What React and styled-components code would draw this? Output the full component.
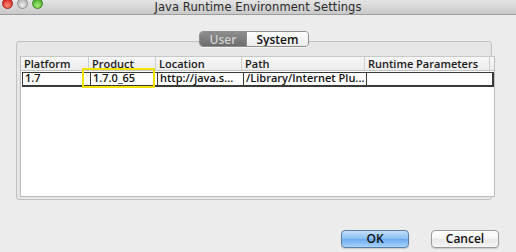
import React from "react";
import styled, { createGlobalStyle } from "styled-components";

const Global = createGlobalStyle`
  html, body { margin: 0; padding: 0; background: #ececec; }
  body { font-family: "Open Sans", "DejaVu Sans", sans-serif; }
`;

const Window = styled.div`
  width: 516px;
  height: 252px;
  background: #ececec;
  display: flex;
  flex-direction: column;
  overflow: hidden;
`;

const TitleBar = styled.div`
  height: 15px;
  flex: none;
  position: relative;
  display: flex;
  align-items: center;
  justify-content: center;
  background: linear-gradient(#e4e4e4, #c9c9c9);
  border-bottom: 1px solid #9d9d9d;
  box-sizing: border-box;
`;

const Lights = styled.div`
  position: absolute;
  left: 2px;
  top: -2px;
  display: flex;
  gap: 4px;
`;

const Light = styled.span`
  width: 11px;
  height: 11px;
  border-radius: 50%;
  box-sizing: border-box;
  border: 1px solid ${(p) => p.$edge};
  background: radial-gradient(circle at 50% 70%, ${(p) => p.$light}, ${(p) => p.$color} 70%);
`;

const Title = styled.div`
  font-family: "DejaVu Sans", sans-serif;
  font-size: 11.5px;
  color: #2a2a2a;
  margin-top: -1px;
  letter-spacing: 0.1px;
`;

const Content = styled.div`
  flex: 1;
  display: flex;
  flex-direction: column;
  padding: 16px 24px 0 16px;
`;

const Tabs = styled.div`
  align-self: center;
  display: flex;
  height: 16px;
  margin-bottom: -6px;
  position: relative;
  z-index: 1;
  border-radius: 4px;
  border: 1px solid #8e8e8e;
  box-sizing: border-box;
  overflow: hidden;
  box-shadow: 0 1px 0 rgba(255, 255, 255, 0.6);
`;

const Tab = styled.div`
  width: ${(p) => p.$w}px;
  display: flex;
  align-items: center;
  justify-content: center;
  font-size: 12px;
  font-weight: 600;
  color: ${(p) => (p.$active ? "#d0d0d0" : "#111")};
  background: ${(p) =>
    p.$active
      ? "linear-gradient(#8e8e8e, #6c6c6c)"
      : "linear-gradient(#ffffff, #ececec)"};
  & + & {
    border-left: 1px solid #8e8e8e;
  }
`;

const Panel = styled.div`
  width: 476px;
  height: 159px;
  box-sizing: border-box;
  border: 1px solid #c2c2c2;
  border-radius: 3px;
  background: #e6e6e6;
  padding: 14px 2px 2px 3px;
  display: flex;
`;

const ScrollPane = styled.div`
  flex: 1;
  background: #fff;
  border: 1px solid #bcbcbc;
  border-top-color: #c8c8c8;
`;

const cols = "68px 67px 86px 123px 125px";

const HeaderRow = styled.div`
  display: grid;
  grid-template-columns: ${cols};
  height: 13px;
  background: linear-gradient(#f7f7f7, #ececec);
  border-bottom: 1px solid #c6c6c6;
`;

const HeadCell = styled.div`
  font-size: 11px;
  line-height: 13px;
  font-weight: 600;
  color: #1a1a1a;
  padding-left: 3px;
  border-right: 1px solid #cfcfcf;
  white-space: nowrap;
  overflow: hidden;
`;

const DataRow = styled.div`
  display: grid;
  grid-template-columns: ${cols};
  height: 15px;
  margin-top: 1px;
  margin-left: 1px;
  box-sizing: border-box;
  border: 1px solid #3a3a3a;
  border-bottom-width: 2px;
  border-right-width: 2px;
`;

const Cell = styled.div`
  position: relative;
  font-size: 11px;
  line-height: 10px;
  font-weight: 600;
  color: #111;
  padding-left: 2px;
  border-right: 1px solid #3a3a3a;
  white-space: nowrap;
  &:last-child { border-right: none; }
`;

const Highlight = styled.div`
  position: absolute;
  left: -9px;
  top: -5px;
  width: 73px;
  height: 20px;
  box-sizing: border-box;
  border: 2px solid #f1e400;
  pointer-events: none;
`;

const Footer = styled.div`
  margin-top: 30px;
  display: flex;
  justify-content: flex-end;
  gap: 22px;
  margin-right: -7px;
`;

const Button = styled.button`
  width: 68px;
  height: 18px;
  box-sizing: border-box;
  border-radius: 4px;
  font-family: "Open Sans", sans-serif;
  font-size: 12px;
  font-weight: 600;
  line-height: 16px;
  padding: 0;
  color: #111;
  border: 1px solid ${(p) => (p.$primary ? "#5b7ea8" : "#9a9a9a")};
  background: ${(p) =>
    p.$primary
      ? "linear-gradient(#c4e0fa 0%, #86bdf2 50%, #6aaaf0 51%, #a9d3fb 100%)"
      : "linear-gradient(#ffffff 0%, #f4f4f4 50%, #e9e9e9 51%, #f6f6f6 100%)"};
  box-shadow: 0 1px 1px rgba(0, 0, 0, 0.15);
`;

export default function App() {
  return (
    <>
      <Global />
      <Window>
        <TitleBar>
          <Lights>
            <Light $color="#d9302a" $light="#ff8f7d" $edge="#a3231d" />
            <Light $color="#b8b8b8" $light="#eeeeee" $edge="#8e8e8e" />
            <Light $color="#4fae2f" $light="#a8ef7a" $edge="#3b8523" />
          </Lights>
          <Title>Java Runtime Environment Settings</Title>
        </TitleBar>
        <Content>
          <Tabs>
            <Tab $w={46} $active>User</Tab>
            <Tab $w={61}>System</Tab>
          </Tabs>
          <Panel>
            <ScrollPane>
              <HeaderRow>
                <HeadCell>Platform</HeadCell>
                <HeadCell>Product</HeadCell>
                <HeadCell>Location</HeadCell>
                <HeadCell>Path</HeadCell>
                <HeadCell>Runtime Parameters</HeadCell>
              </HeaderRow>
              <DataRow>
                <Cell>1.7</Cell>
                <Cell>
                  1.7.0_65
                  <Highlight />
                </Cell>
                <Cell>http://java.s...</Cell>
                <Cell>/Library/Internet Plu...</Cell>
                <Cell />
              </DataRow>
            </ScrollPane>
          </Panel>
          <Footer>
            <Button $primary>OK</Button>
            <Button>Cancel</Button>
          </Footer>
        </Content>
      </Window>
    </>
  );
}
